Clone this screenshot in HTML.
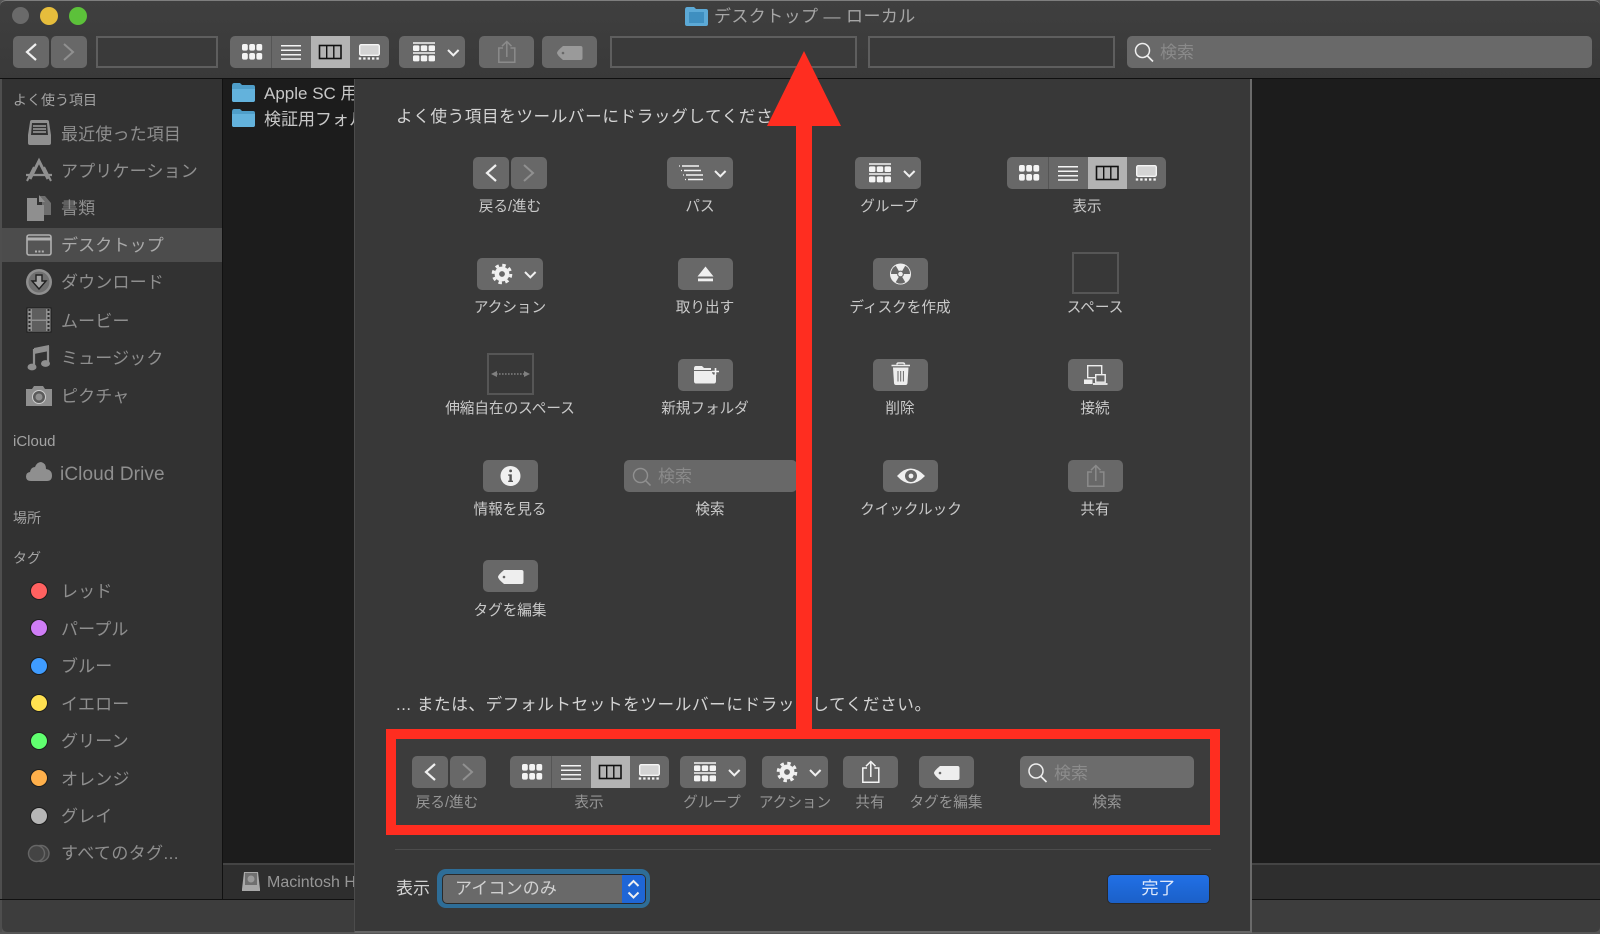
<!DOCTYPE html>
<html lang="ja"><head><meta charset="utf-8"><title>Finder</title>
<style>
html,body{margin:0;padding:0;width:1600px;height:934px;overflow:hidden;background:#555}
body{position:relative;font-family:"Liberation Sans","Noto Sans CJK JP",sans-serif}
div,span,svg{position:absolute;display:block}
.t{height:24px;line-height:24px;white-space:nowrap}
.side{left:61px;font-size:17px;color:#8f8f8f;letter-spacing:.15px}
.head{left:13px;font-size:14px;color:#a3a3a3}
.l{width:200px;text-align:center;font-size:14.6px;color:#c9c9c9;height:20px;line-height:20px;white-space:nowrap}
.d{color:#969696}
.box{box-sizing:border-box;border:2px solid #5e5e5e;background:#3a3a3a;top:36px;height:32px}
.dot{width:16px;height:16px;left:30px;border-radius:50%;border:1px solid #1e1e1e}
</style></head><body>
<svg width="0" height="0" style="left:0;top:0"><defs>
<g id="nav"><rect width="36" height="32" rx="5" fill="#686868"/><rect x="38" width="36" height="32" rx="5" fill="#686868"/><path d="M23 8L14 16L23 24" fill="none" stroke="#f0f0f0" stroke-width="2.2"/><path d="M51 8L60 16L51 24" fill="none" stroke="#909090" stroke-width="2"/></g>
<g id="view"><rect width="159" height="32" rx="5" fill="#686868"/><path d="M81 0H120V32H81Z" fill="#b3b3b3"/><path d="M41.5 0V32" stroke="#555" stroke-width="1"/>
<g fill="#f4f4f4"><rect x="12" y="8" width="5.8" height="6.6" rx="1.8"/><rect x="19.2" y="8" width="5.8" height="6.6" rx="1.8"/><rect x="26.4" y="8" width="5.8" height="6.6" rx="1.8"/><rect x="12" y="17" width="5.8" height="6.6" rx="1.8"/><rect x="19.2" y="17" width="5.8" height="6.6" rx="1.8"/><rect x="26.4" y="17" width="5.8" height="6.6" rx="1.8"/></g>
<path d="M51 9.7H71M51 14.2H71M51 18.7H71M51 23H71" stroke="#f4f4f4" stroke-width="1.5"/>
<rect x="89.5" y="9.5" width="21.5" height="13" fill="#b3b3b3" stroke="#111" stroke-width="1.6"/><path d="M96.7 9.5V22.5M103.8 9.5V22.5" stroke="#111" stroke-width="1.4"/>
<rect x="129.7" y="8.7" width="19.6" height="10.6" rx="1.5" fill="#d4d4d4" stroke="#f4f4f4" stroke-width="1.4"/><path d="M128.8 22.5H150" stroke="#f4f4f4" stroke-width="2.2" stroke-dasharray="2.4 2"/></g>
<g id="chev"><path d="M0 0L5.3 5.3L10.6 0" fill="none" stroke="#f0f0f0" stroke-width="2"/></g>
<g id="group"><rect width="66" height="32" rx="5" fill="#686868"/><path d="M14 7H36M14 17H36" stroke="#f4f4f4" stroke-width="1.4"/><g fill="#f4f4f4"><rect x="14" y="9.4" width="6.4" height="5.6" rx="1.4"/><rect x="21.8" y="9.4" width="6.4" height="5.6" rx="1.4"/><rect x="29.6" y="9.4" width="6.4" height="5.6" rx="1.4"/><rect x="14" y="19.4" width="6.4" height="6" rx="1.4"/><rect x="21.8" y="19.4" width="6.4" height="6" rx="1.4"/><rect x="29.6" y="19.4" width="6.4" height="6" rx="1.4"/></g><use href="#chev" x="49" y="14"/></g>
<g id="path"><rect width="66" height="32" rx="5" fill="#686868"/><path d="M15 9H32M17 13.5H34M19 18H36M21 22.5H36" stroke="#f4f4f4" stroke-width="1.4"/><path d="M12 9H14M14 13.5H16M16 18H18M18 22.5H20" stroke="#f4f4f4" stroke-width="1.2" stroke-dasharray="1 1"/><use href="#chev" x="48" y="14"/></g>
<g id="gear"><circle cx="25" cy="16" r="7.4" fill="#f0f0f0"/><circle cx="25" cy="16" r="8.8" fill="none" stroke="#f0f0f0" stroke-width="3" stroke-dasharray="3.456 3.456"/><circle cx="25" cy="16" r="2.9" fill="#686868"/></g>
<g id="action"><rect width="66" height="32" rx="5" fill="#686868"/><use href="#gear"/><use href="#chev" x="48" y="14"/></g>
<g id="eject"><rect width="55" height="32" rx="5" fill="#686868"/><path d="M27.5 8.5L35.5 18.5H19.5Z" fill="#f0f0f0"/><rect x="20" y="20.5" width="15" height="2.8" fill="#f0f0f0"/></g>
<g id="disk"><rect width="55" height="32" rx="5" fill="#686868"/><circle cx="27.5" cy="16" r="10.5" fill="#eee"/><g transform="translate(27.5 16)" fill="#686868"><path d="M0 0L4.8 8.2A9.4 9.4 0 0 1 -4.8 8.2Z"/><path transform="rotate(120)" d="M0 0L4.8 8.2A9.4 9.4 0 0 1 -4.8 8.2Z"/><path transform="rotate(240)" d="M0 0L4.8 8.2A9.4 9.4 0 0 1 -4.8 8.2Z"/></g><circle cx="27.5" cy="16" r="3.4" fill="#686868"/><circle cx="27.5" cy="16" r="2.3" fill="#eee"/></g>
<g id="fold"><rect width="55" height="32" rx="5" fill="#686868"/><path d="M16 9.5Q16 7 18 7H24L26 9H33V12H38V22Q38 24.5 36 24.5H18Q16 24.5 16 22Z" fill="#eee"/><path d="M16 11.5H36" stroke="#686868" stroke-width="1"/><path d="M37 9.5V15.5M34 12.5H40.5" stroke="#686868" stroke-width="4"/><path d="M37.5 9V16M34 12.5H41" stroke="#f4f4f4" stroke-width="1.6"/></g>
<g id="trash"><rect width="55" height="32" rx="5" fill="#686868"/><path d="M18.5 6.5H37M24 5.5Q24 4 25.5 4H30Q31.5 4 31.5 5.5" fill="none" stroke="#eee" stroke-width="1.6"/><path d="M20 8.5H35.5L34.5 24Q34.3 26 32.5 26H23Q21.2 26 21 24Z" fill="#eee"/><path d="M25 12V22.5M27.7 12V22.5M30.4 12V22.5" stroke="#686868" stroke-width="1"/></g>
<g id="conn"><rect width="55" height="32" rx="5" fill="#686868"/><rect x="19.7" y="6.7" width="14" height="12" fill="#686868" stroke="#eee" stroke-width="1.4"/><rect x="16" y="20.5" width="8.5" height="4.5" fill="#eee"/><rect x="27.7" y="15.7" width="9.5" height="7.5" fill="#686868" stroke="#eee" stroke-width="1.4"/><path d="M25 25H39.5" stroke="#eee" stroke-width="1.8"/></g>
<g id="eye"><rect width="55" height="32" rx="5" fill="#686868"/><path d="M14 16Q27.5 1 42 16Q27.5 31 14 16Z" fill="#f0f0f0"/><circle cx="28" cy="16" r="6" fill="#686868"/><circle cx="28" cy="16" r="2.4" fill="#f0f0f0"/></g>
<g id="info"><rect width="55" height="32" rx="5" fill="#686868"/><circle cx="27.5" cy="16" r="10" fill="#f0f0f0"/><rect x="26.2" y="9.5" width="2.8" height="2.8" rx="1.2" fill="#555"/><path d="M25.2 14.4H28.8V20.6H30V22H25.2V20.6H26.4V15.8H25.2Z" fill="#555"/></g>
<g id="tag"><rect width="55" height="32" rx="5" fill="#686868"/><path d="M21 10H38.5Q40.5 10 40.5 12V22Q40.5 24 38.5 24H21Q15 19 15 17Q15 15 21 10Z" fill="#eee"/><circle cx="21" cy="17" r="1.3" fill="#686868"/></g>
<g id="share"><rect width="55" height="32" rx="5" fill="#686868"/><path d="M24 12H19.8V26.3H35.8V12H31.5M27.8 21V6M23 10.2L27.8 5.5L32.5 10.2" fill="none" stroke="#f4f4f4" stroke-width="1.5"/></g>
<g id="sharedim"><rect width="55" height="32" rx="5" fill="#686868"/><path d="M24 12H19.8V26.3H35.8V12H31.5M27.8 21V6M23 10.2L27.8 5.5L32.5 10.2" fill="none" stroke="#8b8b8b" stroke-width="1.5"/></g>
<g id="tagdim"><rect width="55" height="32" rx="5" fill="#686868"/><path d="M21 10H38.5Q40.5 10 40.5 12V22Q40.5 24 38.5 24H21Q15 19 15 17Q15 15 21 10Z" fill="#9a9a9a"/><circle cx="21" cy="17" r="1.3" fill="#686868"/></g>
</defs></svg>

<!-- title bar -->
<div style="left:0;top:0;width:1600px;height:79px;background:linear-gradient(#3f3f3f,#393939);border-radius:6px 6px 0 0;border-top:1px solid #7e7e7e;box-sizing:border-box"></div>
<div style="left:0;top:78px;width:1600px;height:1px;background:#101010"></div>
<div style="left:12px;top:7px;width:17px;height:17px;border-radius:50%;background:#6a6a6a"></div>
<div style="left:40px;top:7px;width:18px;height:18px;border-radius:50%;background:#e6bd3c"></div>
<div style="left:69px;top:7px;width:18px;height:18px;border-radius:50%;background:#5cc13a"></div>
<svg style="left:685px;top:7px" width="23" height="19"><path d="M0 3Q0 0 2 0H9L11 2H21Q23 2 23 4V17Q23 19 21 19H2Q0 19 0 17Z" fill="#5ca9d6"/><rect x="4" y="5" width="15" height="11" fill="#3f8fc0"/></svg>
<div class="t" style="left:714px;top:5px;font-size:17px;letter-spacing:.4px;color:#a6a6a6">デスクトップ — ローカル</div>

<!-- toolbar -->
<svg style="left:13px;top:36px" width="74" height="32"><use href="#nav"/></svg>
<div class="box" style="left:96px;width:122px"></div>
<svg style="left:230px;top:36px" width="159" height="33"><use href="#view"/></svg>
<svg style="left:399px;top:36px" width="66" height="32"><use href="#group"/></svg>
<svg style="left:479px;top:36px" width="55" height="32"><use href="#sharedim"/></svg>
<svg style="left:542px;top:36px" width="55" height="32"><use href="#tagdim"/></svg>
<div class="box" style="left:610px;width:247px"></div>
<div class="box" style="left:868px;width:247px"></div>
<div style="left:1127px;top:36px;width:465px;height:32px;border-radius:5px;background:#696969"></div>
<svg style="left:1127px;top:36px" width="32" height="32"><circle cx="15.5" cy="14.5" r="7" fill="none" stroke="#eee" stroke-width="1.5"/><path d="M20.5 20L26 25.5" stroke="#eee" stroke-width="1.7"/></svg>
<div class="t" style="left:1160px;top:41px;font-size:17px;color:#8a8a8a">検索</div>

<!-- sidebar -->
<div style="left:0;top:79px;width:222px;height:820px;background:#323232"></div>
<div style="left:222px;top:79px;width:1px;height:820px;background:#111"></div>
<div style="left:0;top:79px;width:2px;height:853px;background:#4e4e4e"></div>
<div style="left:2px;top:228px;width:220px;height:34px;background:#4c4c4c"></div>
<div class="t head" style="top:88px">よく使う項目</div>
<svg style="left:26px;top:120px" width="27" height="26"><path d="M4 2Q4 0 6 0H21Q23 0 23 2L25 15V23Q25 25 23 25H4Q2 25 2 23V15Z" fill="#8f8f8f"/><path d="M6 3H21L22 15H5Z" fill="#323232"/><path d="M7 6H20M7 9H20M7 12H20" stroke="#8f8f8f" stroke-width="1.7"/></svg>
<div class="t side" style="top:123px">最近使った項目</div>
<svg style="left:25px;top:157px" width="28" height="26"><path d="M5 22L14 4L23 22" fill="none" stroke="#8f8f8f" stroke-width="3"/><path d="M1 18H27" stroke="#8f8f8f" stroke-width="2.2"/><path d="M2 24L9 10M26 24L19 10" stroke="#8f8f8f" stroke-width="2"/></svg>
<div class="t side" style="top:160px">アプリケーション</div>
<svg style="left:26px;top:194px" width="26" height="28"><path d="M13 2H19L25 9V21H16V8H13Z" fill="#6e6e6e"/><path d="M1 4H11V11H18V27H1Z" fill="#8f8f8f"/><path d="M13 1L19 8H13Z" fill="#8f8f8f"/></svg>
<div class="t side" style="top:197px">書類</div>
<svg style="left:26px;top:234px" width="26" height="22"><rect x="1" y="1" width="24" height="20" rx="2" fill="#555" stroke="#b0b0b0" stroke-width="1.6"/><path d="M1 5H25" stroke="#b0b0b0" stroke-width="3"/><path d="M9 17.5H18" stroke="#b0b0b0" stroke-width="2" stroke-dasharray="2 1.4"/></svg>
<div class="t side" style="top:234px;color:#a9a9a9">デスクトップ</div>
<svg style="left:26px;top:269px" width="26" height="26"><circle cx="13" cy="13" r="13" fill="#8f8f8f"/><circle cx="13" cy="13" r="10.5" fill="#707070"/><path d="M10 6H16V12H20L13 20L6 12H10Z" fill="#a2a2a2" stroke="#202020" stroke-width="1.4"/></svg>
<div class="t side" style="top:271px">ダウンロード</div>
<svg style="left:26px;top:307px" width="26" height="26"><rect x="1" y="1" width="24" height="24" fill="#8f8f8f" stroke="#1c1c1c"/><rect x="6" y="2" width="14" height="10.5" fill="#5e5e5e"/><rect x="6" y="14" width="14" height="10" fill="#5e5e5e"/><path d="M3.5 2V25M22.5 2V25" stroke="#2a2a2a" stroke-width="2" stroke-dasharray="2 2"/></svg>
<div class="t side" style="top:308px;margin-top:1.5px">ムービー</div>
<svg style="left:27px;top:343px" width="24" height="28"><path d="M7 5L22 2V8L7 11Z" fill="#8f8f8f"/><path d="M21 3V20M7 6V24" stroke="#8f8f8f" stroke-width="2.2"/><ellipse cx="5" cy="24" rx="4.5" ry="3.4" fill="#8f8f8f"/><ellipse cx="18.5" cy="20.5" rx="4.5" ry="3.4" fill="#8f8f8f"/></svg>
<div class="t side" style="top:346px;margin-top:.5px">ミュージック</div>
<svg style="left:26px;top:385px" width="26" height="22"><path d="M0 4H6L8 1H17L19 4H26V21H0Z" fill="#8f8f8f"/><circle cx="13" cy="12" r="6.5" fill="#5a5a5a" stroke="#ccc" stroke-width="1"/><circle cx="13" cy="12" r="3.5" fill="#8f8f8f"/></svg>
<div class="t side" style="top:385px">ピクチャ</div>
<div class="t head" style="top:430px;left:13px;font-size:15px">iCloud</div>
<svg style="left:26px;top:462px" width="26" height="20"><path d="M5 19Q0 19 0 14.5Q0 10.5 4 10Q5 5 9 5Q11 0 15 0Q20 1 20 7Q26 8 26 13.5Q26 19 21 19Z" fill="#8f8f8f"/></svg>
<div class="t side" style="top:463px;font-size:19px;left:60px;letter-spacing:.1px">iCloud Drive</div>
<div class="t head" style="top:506px">場所</div>
<div class="t head" style="top:546px">タグ</div>
<div class="dot" style="top:582px;background:#ff6160"></div><div class="t side" style="top:580px">レッド</div>
<div class="dot" style="top:619px;background:#cf7df6"></div><div class="t side" style="top:618px">パープル</div>
<div class="dot" style="top:657px;background:#3f9cff"></div><div class="t side" style="top:655px">ブルー</div>
<div class="dot" style="top:694px;background:#ffe150"></div><div class="t side" style="top:693px">イエロー</div>
<div class="dot" style="top:732px;background:#60ff6f"></div><div class="t side" style="top:730px">グリーン</div>
<div class="dot" style="top:769px;background:#ffb04b"></div><div class="t side" style="top:768px">オレンジ</div>
<div class="dot" style="top:807px;background:#b6b6b6"></div><div class="t side" style="top:805px">グレイ</div>
<svg style="left:27px;top:844px" width="24" height="19"><circle cx="14" cy="9.5" r="8" fill="#444" stroke="#666" stroke-width="1.4"/><circle cx="9.5" cy="9.5" r="8" fill="#444" stroke="#666" stroke-width="1.4"/></svg>
<div class="t side" style="top:842px;letter-spacing:.4px">すべてのタグ...</div>

<!-- content -->
<div style="left:223px;top:79px;width:1377px;height:784px;background:#1c1c1c"></div>
<div style="left:223px;top:863px;width:1377px;height:2px;background:#444"></div>
<div style="left:223px;top:865px;width:1377px;height:34px;background:#2e2e2e"></div>
<div style="left:0;top:899px;width:1600px;height:1px;background:#111"></div>
<div style="left:2px;top:900px;width:1598px;height:32px;background:#3d3d3d;border-radius:0 0 5px 5px"></div>
<svg style="left:232px;top:83px" width="23" height="19"><path d="M0 3Q0 0 2 0H8L10 2H21Q23 2 23 4V17Q23 19 21 19H2Q0 19 0 17Z" fill="#4f9ec9"/><path d="M0 6H23V17Q23 19 21 19H2Q0 19 0 17Z" fill="#63b2dc"/></svg>
<svg style="left:232px;top:109px" width="23" height="18"><path d="M0 3Q0 0 2 0H8L10 2H21Q23 2 23 4V16Q23 18 21 18H2Q0 18 0 16Z" fill="#4f9ec9"/><path d="M0 5H23V16Q23 18 21 18H2Q0 18 0 16Z" fill="#63b2dc"/></svg>
<div class="t" style="left:264px;top:82px;font-size:17px;color:#c8c8c8">Apple SC 用</div>
<div class="t" style="left:264px;top:108px;font-size:17px;color:#c8c8c8">検証用フォルダ</div>
<svg style="left:242px;top:871px" width="18" height="20"><path d="M2 1H16L18 18V20H0V18Z" fill="#a8a8a8"/><rect x="3" y="2" width="12" height="12" fill="#707070"/><circle cx="9" cy="8" r="3.5" fill="#9a9a9a"/></svg>
<div class="t" style="left:267px;top:871px;font-size:16px;color:#979797">Macintosh HD</div>

<!-- sheet -->
<div style="left:354px;top:79px;width:895px;height:852px;background:#383838;border-right:2px solid #6a6a6a;border-bottom:2px solid #666;border-left:1px solid #4c4c4c"></div>
<div class="t" style="left:396px;top:105px;font-size:16.6px;letter-spacing:.6px;color:#d4d4d4">よく使う項目をツールバーにドラッグしてください。</div>

<svg style="left:473px;top:157px" width="74" height="32"><use href="#nav"/></svg><div class="l" style="left:410px;top:197px">戻る/進む</div>
<svg style="left:667px;top:157px" width="66" height="32"><use href="#path"/></svg><div class="l" style="left:600px;top:197px">パス</div>
<svg style="left:855px;top:157px" width="66" height="32"><use href="#group"/></svg><div class="l" style="left:789px;top:197px">グループ</div>
<svg style="left:1007px;top:157px" width="159" height="32"><use href="#view"/></svg><div class="l" style="left:987px;top:197px">表示</div>

<svg style="left:477px;top:258px" width="66" height="32"><use href="#action"/></svg><div class="l" style="left:410px;top:298px">アクション</div>
<svg style="left:678px;top:258px" width="55" height="32"><use href="#eject"/></svg><div class="l" style="left:605px;top:298px">取り出す</div>
<svg style="left:873px;top:258px" width="55" height="32"><use href="#disk"/></svg><div class="l" style="left:800px;top:298px">ディスクを作成</div>
<div style="left:1072px;top:252px;width:47px;height:42px;box-sizing:border-box;border:2px solid #565656"></div><div class="l" style="left:995px;top:298px">スペース</div>

<div style="left:487px;top:353px;width:47px;height:42px;box-sizing:border-box;border:2px solid #565656"></div>
<svg style="left:487px;top:353px" width="47" height="42"><path d="M4 21L10 18V24Z" fill="#808080"/><path d="M43 21L37 18V24Z" fill="#808080"/><path d="M9 21H38" stroke="#808080" stroke-width="1.6" stroke-dasharray="1.6 1.4"/></svg>
<div class="l" style="left:410px;top:399px">伸縮自在のスペース</div>
<svg style="left:678px;top:359px" width="55" height="32"><use href="#fold"/></svg><div class="l" style="left:605px;top:399px">新規フォルダ</div>
<svg style="left:873px;top:359px" width="55" height="32"><use href="#trash"/></svg><div class="l" style="left:800px;top:399px">削除</div>
<svg style="left:1068px;top:359px" width="55" height="32"><use href="#conn"/></svg><div class="l" style="left:995px;top:399px">接続</div>

<svg style="left:483px;top:460px" width="55" height="32"><use href="#info"/></svg><div class="l" style="left:410px;top:500px">情報を見る</div>
<div style="left:624px;top:460px;width:173px;height:32px;border-radius:5px;background:#686868"></div>
<svg style="left:624px;top:460px" width="32" height="32"><circle cx="16.5" cy="15.5" r="7" fill="none" stroke="#909090" stroke-width="1.4"/><path d="M21.5 20.5L26.5 25.5" stroke="#909090" stroke-width="1.5"/></svg>
<div class="t" style="left:658px;top:465px;font-size:17px;color:#8a8a8a">検索</div>
<div class="l" style="left:610px;top:500px">検索</div>
<svg style="left:883px;top:460px" width="55" height="32"><use href="#eye"/></svg><div class="l" style="left:811px;top:500px">クイックルック</div>
<svg style="left:1068px;top:460px" width="55" height="32"><use href="#sharedim"/></svg><div class="l" style="left:995px;top:500px">共有</div>

<svg style="left:483px;top:560px" width="55" height="32"><use href="#tag"/></svg><div class="l" style="left:410px;top:601px">タグを編集</div>

<div class="t" style="left:396px;top:693px;font-size:16.6px;letter-spacing:.6px;color:#d4d4d4">... または、デフォルトセットをツールバーにドラッグしてください。</div>

<!-- default set -->
<div style="left:396px;top:739px;width:814px;height:86px;background:#3c3c3c"></div>
<svg style="left:412px;top:756px" width="74" height="32"><use href="#nav"/></svg><div class="l d" style="left:347px;top:793px">戻る/進む</div>
<svg style="left:510px;top:756px" width="159" height="32"><use href="#view"/></svg><div class="l d" style="left:489px;top:793px">表示</div>
<svg style="left:680px;top:756px" width="66" height="32"><use href="#group"/></svg><div class="l d" style="left:612px;top:793px">グループ</div>
<svg style="left:762px;top:756px" width="66" height="32"><use href="#action"/></svg><div class="l d" style="left:695px;top:793px">アクション</div>
<svg style="left:843px;top:756px" width="55" height="32"><use href="#share"/></svg><div class="l d" style="left:770px;top:793px">共有</div>
<svg style="left:919px;top:756px" width="55" height="32"><use href="#tag"/></svg><div class="l d" style="left:846px;top:793px">タグを編集</div>
<div style="left:1020px;top:756px;width:174px;height:32px;border-radius:5px;background:#6c6c6c"></div>
<svg style="left:1020px;top:756px" width="32" height="32"><circle cx="16" cy="15" r="7" fill="none" stroke="#eee" stroke-width="1.5"/><path d="M21 20.5L26.5 26" stroke="#eee" stroke-width="1.7"/></svg>
<div class="t" style="left:1054px;top:762px;font-size:17px;color:#8c8c8c">検索</div>
<div class="l d" style="left:1007px;top:793px">検索</div>

<!-- red annotation -->
<div style="left:386px;top:729px;width:834px;height:106px;box-sizing:border-box;border:10px solid #ff2d20"></div>
<svg style="left:760px;top:45px" width="90" height="690"><path d="M44 6L81 81H52V690H36V81H7Z" fill="#ff2d20"/></svg>

<!-- bottom -->
<div style="left:395px;top:849px;width:816px;height:1px;background:#4c4c4c"></div>
<div class="t" style="left:396px;top:877px;font-size:17px;color:#d2d2d2">表示</div>
<div style="left:437px;top:869px;width:213px;height:39px;border-radius:9px;background:#2e6d97"></div>
<div style="left:443px;top:875px;width:202px;height:28px;border-radius:4px;background:#696969;overflow:hidden;box-shadow:0 0 0 1px #2a2a2a"><div style="left:179px;top:0;width:23px;height:28px;background:#1f66d6"></div></div>
<div class="t" style="left:455px;top:877px;font-size:17px;letter-spacing:.15px;color:#d0d0d0">アイコンのみ</div>
<svg style="left:622px;top:875px" width="23" height="28"><path d="M6.5 11L11.5 6L16.5 11M6.5 17.5L11.5 22.5L16.5 17.5" fill="none" stroke="#f0f0f0" stroke-width="2"/></svg>
<div style="left:1108px;top:875px;width:101px;height:28px;border-radius:4px;background:linear-gradient(#2170e6,#1b60c8);box-shadow:0 0 0 1px #2a2a2a"></div>
<div class="t" style="left:1108px;top:877px;width:101px;text-align:center;font-size:17px;color:#dfe9fb">完了</div>
</body></html>
